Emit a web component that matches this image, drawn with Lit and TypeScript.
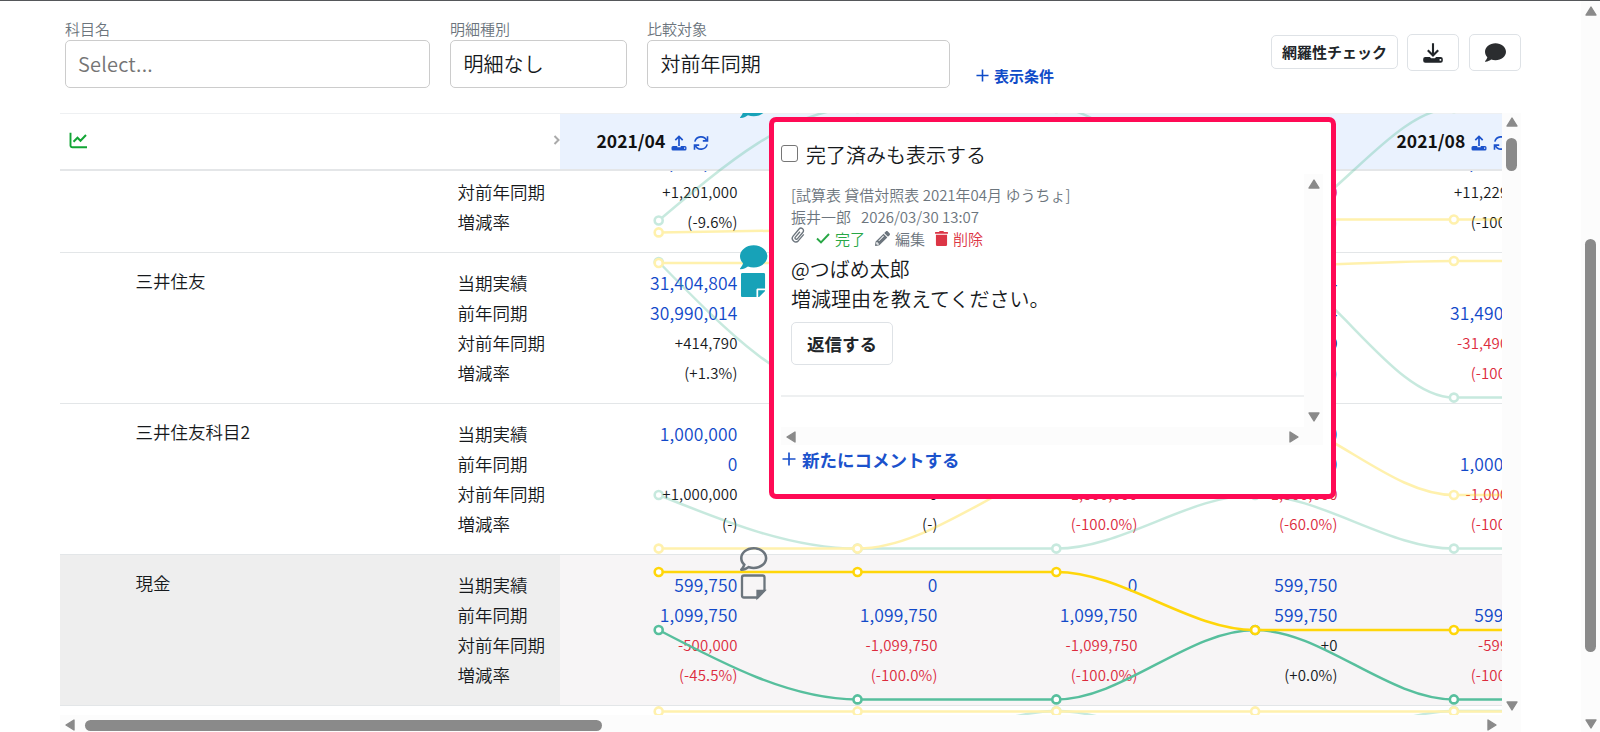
import { LitElement, html, svg, css } from "lit";
import { customElement } from "lit/decorators.js";
import { classMap } from "lit/directives/class-map.js";

type Tone = "link" | "ink" | "minus";
type Line = [string, Tone];
interface Account {
  name: string;
  active?: boolean;
  cells: Line[][];
}
interface Series {
  kind: "green" | "yellow";
  active?: boolean;
  ys: number[];
}

const LABELS = ["当期実績", "前年同期", "対前年同期", "増減率"];
const MONTHS = ["2021/04", "2021/05", "2021/06", "2021/07", "2021/08"];

const cell = (now: string, prev: string, diff: string, rate: string, tone: Tone): Line[] => [
  [now, "link"],
  [prev, "link"],
  [diff, tone],
  [rate, tone],
];

const ACCOUNTS: Account[] = [
  {
    name: "ゆうちょ",
    cells: [
      cell("11,229,000", "12,430,000", "+1,201,000", "(-9.6%)", "ink"),
      cell("0", "12,430,000", "+12,430,000", "(-100.0%)", "ink"),
      cell("0", "12,430,000", "+12,430,000", "(-100.0%)", "ink"),
      cell("12,430,000", "11,229,000", "-1,201,000", "(-9.6%)", "minus"),
      cell("0", "11,229,000", "+11,229,000", "(-100.0%)", "ink"),
    ],
  },
  {
    name: "三井住友",
    cells: [
      cell("31,404,804", "30,990,014", "+414,790", "(+1.3%)", "ink"),
      cell("0", "30,990,014", "-30,990,014", "(-100.0%)", "minus"),
      cell("0", "30,990,014", "-30,990,014", "(-100.0%)", "minus"),
      cell("31,404,804", "30,990,014", "+414,790", "(+1.3%)", "ink"),
      cell("0", "31,490,014", "-31,490,014", "(-100.0%)", "minus"),
    ],
  },
  {
    name: "三井住友科目2",
    cells: [
      cell("1,000,000", "0", "+1,000,000", "(-)", "ink"),
      cell("0", "0", "+0", "(-)", "ink"),
      cell("0", "1,500,000", "-1,500,000", "(-100.0%)", "minus"),
      cell("1,000,000", "2,500,000", "-1,500,000", "(-60.0%)", "minus"),
      cell("0", "1,000,000", "-1,000,000", "(-100.0%)", "minus"),
    ],
  },
  {
    name: "現金",
    active: true,
    cells: [
      cell("599,750", "1,099,750", "-500,000", "(-45.5%)", "minus"),
      cell("0", "1,099,750", "-1,099,750", "(-100.0%)", "minus"),
      cell("0", "1,099,750", "-1,099,750", "(-100.0%)", "minus"),
      cell("599,750", "599,750", "+0", "(+0.0%)", "ink"),
      cell("0", "599,750", "-599,750", "(-100.0%)", "minus"),
    ],
  },
];

const X0 = 658.7;
const STEP = 198.8;
const SERIES: Series[] = [
  { kind: "green", ys: [220.5, 108, 108, 231, 108, 108] },
  { kind: "yellow", ys: [232.4, 229.5, 225, 219.5, 219.5, 219.5] },
  { kind: "green", ys: [262, 397.6, 397.6, 261, 397.6, 397.6] },
  { kind: "yellow", ys: [263, 263, 263, 266, 261, 261] },
  { kind: "green", ys: [495, 548.6, 548.6, 495, 548.6, 548.6] },
  { kind: "yellow", ys: [548.6, 548.6, 468, 415, 495, 495] },
  { kind: "green", active: true, ys: [630, 699.4, 699.4, 630, 699.4, 699.4] },
  { kind: "yellow", active: true, ys: [572, 572, 572, 630, 630, 630] },
  { kind: "green", ys: [760, 760, 711, 760, 711, 711] },
  { kind: "yellow", ys: [711.4, 711.4, 711.4, 711.4, 711.4, 711.4] },
];

/** Monotone cubic path through evenly spaced points. */
function monotonePath(ys: number[]): string {
  const n = ys.length;
  const d = ys.slice(1).map((y, i) => y - ys[i]);
  const m = new Array<number>(n).fill(0);
  for (let i = 1; i < n - 1; i++) {
    const a = d[i - 1];
    const b = d[i];
    if (a * b > 0) m[i] = Math.sign(a) * Math.min(2 * Math.abs(a), 2 * Math.abs(b), Math.abs(a + b) / 2);
  }
  m[0] = (3 * d[0] - m[1]) / 2;
  m[n - 1] = (3 * d[n - 2] - m[n - 2]) / 2;
  let p = `M${X0} ${ys[0]}`;
  for (let i = 0; i < n - 1; i++) {
    const x = X0 + i * STEP;
    p += `C${x + STEP / 3} ${ys[i] + m[i] / 3} ${x + (2 * STEP) / 3} ${ys[i + 1] - m[i + 1] / 3} ${x + STEP} ${ys[i + 1]}`;
  }
  return p;
}

const BUBBLE =
  "M256 32C114.6 32 0 125.1 0 240c0 49.6 21.4 95 57 130.7C44.5 421.1 2.7 466 2.2 466.5c-2.2 2.3-2.8 5.7-1.5 8.7S4.8 480 8 480c66.3 0 116-31.8 140.6-51.4 32.7 12.3 69 19.4 107.4 19.4 141.4 0 256-93.1 256-208S397.4 32 256 32z";
const BUBBLE_OUTLINE =
  "M256 32C114.6 32 0 125.1 0 240c0 47.6 19.9 91.2 52.9 126.3C38 405.7 7 439.1 6.5 439.5c-6.6 7-8.4 17.2-4.6 26S14.4 480 24 480c61.5 0 110-25.7 139.1-46.3C192 442.8 223.2 448 256 448c141.4 0 256-93.1 256-208S397.4 32 256 32zm0 368c-26.7 0-53.1-4.1-78.400-12.100l-22.700-7.200-19.500 13.800c-14.300 10.100-33.900 21.400-57.500 29 7.300-12.100 14.400-25.700 19.900-40.200l10.600-28.100-20.600-21.800C69.700 314.100 48 282.200 48 240c0-88.200 93.300-160 208-160s208 71.800 208 160-93.300 160-208 160z";
const NOTE =
  "M312 320h136V56c0-13.300-10.700-24-24-24H24C10.700 32 0 42.700 0 56v400c0 13.300 10.700 24 24 24h264V344c0-13.200 10.800-24 24-24zm129 55l-98 98c-4.500 4.500-10.600 7-17 7h-6V352h128v6.100c0 6.300-2.500 12.400-7 16.900z";
const TRASH =
  "M432 32H312l-9.4-18.7A24 24 0 0 0 281.1 0H166.8a23.72 23.72 0 0 0-21.4 13.3L136 32H16A16 16 0 0 0 0 48v32a16 16 0 0 0 16 16h416a16 16 0 0 0 16-16V48a16 16 0 0 0-16-16zM32 128v340a44 44 0 0 0 44 44h296a44 44 0 0 0 44-44V128z";
const PENCIL =
  "M497.9 142.1l-46.1 46.1c-4.7 4.7-12.3 4.7-17 0l-111-111c-4.7-4.7-4.7-12.3 0-17l46.1-46.1c18.7-18.7 49.1-18.7 67.9 0l60.1 60.1c18.8 18.7 18.8 49.1 0 67.9zM284.2 99.8L21.6 362.4.4 483.9c-2.9 16.4 11.4 30.6 27.8 27.8l121.5-21.3 262.6-262.6c4.7-4.7 4.7-12.3 0-17l-111-111c-4.8-4.7-12.4-4.7-17.1 0zM124.1 339.9c-5.5-5.5-5.5-14.3 0-19.8l154-154c5.5-5.5 14.3-5.5 19.8 0s5.5 14.3 0 19.8l-154 154c-5.5 5.5-14.3 5.5-19.8 0zM88 424h48v36.3l-64.5 11.3-31.1-31.1L51.7 376H88v48z";

const uploadIcon = html`<svg class="i16" viewBox="0 0 16 16">
  <path d="M8 11V1.600M4.300 5.200L8 1.500l3.700 3.700" fill="none" stroke="currentColor" stroke-width="1.700" />
  <path fill-rule="evenodd" d="M2 11h4.300v1.200h3.400V11H14a1.500 1.500 0 0 1 1.500 1.500v1.500a1.500 1.500 0 0 1-1.500 1.500H2A1.500 1.500 0 0 1 .5 14v-1.500A1.500 1.500 0 0 1 2 11zm11 1.600v1.200h1.200v-1.200z" fill="currentColor" />
</svg>`;
const downloadIcon = html`<svg class="i20" viewBox="0 0 20 20">
  <path d="M10 .3V12M4.800 7.300L10 12.500l5.200-5.200" fill="none" stroke="currentColor" stroke-width="2.100" />
  <path fill-rule="evenodd" d="M2.300 14h4.500l1.400 1.200h3.600l1.400-1.200h4.500a2.100 2.100 0 0 1 2.100 2.100v1.600a2.100 2.100 0 0 1-2.100 2.100H2.300a2.100 2.100 0 0 1-2.100-2.100v-1.600A2.100 2.100 0 0 1 2.300 14zm14.300 2v1.700h1.600V16z" fill="currentColor" />
</svg>`;
const syncIcon = html`<svg class="i16" viewBox="0 0 16 16">
  <g fill="none" stroke="currentColor" stroke-width="1.600">
    <path d="M1.800 6.600A6.400 6.400 0 0 1 13.700 5.400" />
    <path d="M14.200 9.400A6.400 6.400 0 0 1 2.300 10.600" />
    <path d="M14.500 1.200v4.700H9.800" />
    <path d="M1.500 14.800v-4.700h4.700" />
  </g>
</svg>`;
const plusIcon = html`<svg class="plus" viewBox="0 0 14 14">
  <path d="M7 .5v13M.5 7h13" stroke="currentColor" stroke-width="1.700" />
</svg>`;
const tri = (dir: string) => html`<svg class="tri ${dir}" viewBox="0 0 12 10">
  <path d="M6 1L11 9H1z" fill="#8a8a8a" stroke="#8a8a8a" stroke-width="1.400" stroke-linejoin="round" />
</svg>`;

@customElement("app-root")
export class AppRoot extends LitElement {
  static styles = css`
    :host {
      display: block;
      width: 1600px;
      height: 732px;
      overflow: hidden;
      background: #fff;
      color: #16191c;
      font-family: "Noto Sans CJK JP", sans-serif;
      font-size: 20px;
      font-weight: 350;
    }
    * { box-sizing: border-box; }
    svg { display: block; flex: none; }
    .page {
      position: relative;
      display: flex;
      height: 732px;
      border-top: 1px solid #55575a;
    }
    .main { width: 1581px; padding-left: 60px; }
    .filters {
      display: flex;
      height: 112px;
      padding: 17px 0 0 5px;
    }
    .field { margin-right: 20px; }
    .f1 { width: 365px; }
    .f2 { width: 177px; }
    .f3 { width: 303px; margin-right: 26px; }
    .field label {
      display: block;
      height: 22px;
      font-size: 15px;
      line-height: 21px;
      color: #6c757d;
      white-space: nowrap;
    }
    .select {
      height: 48px;
      border: 1px solid #ccc;
      border-radius: 5px;
      padding-left: 12.500px;
      line-height: 46px;
      letter-spacing: 0.05px;
    }
    .placeholder { padding-left: 12px; letter-spacing: 0.2px; color: #757575; }
    .more {
      display: flex;
      align-items: center;
      gap: 5px;
      height: 24px;
      margin-top: 45px;
      font-size: 15px;
      font-weight: 700;
      color: #0f4bc8;
    }
    .plus { width: 13px; height: 13px; }
    .tools {
      display: flex;
      align-items: center;
      gap: 10px;
      height: 37px;
      margin: 16px 0 0 auto;
      padding-right: 60px;
    }
    .btn {
      display: flex;
      align-items: center;
      justify-content: center;
      border: 1px solid #dee2e6;
      border-radius: 5px;
      color: #212529;
      font-weight: 700;
      background: #fff;
    }
    .check { width: 127px; height: 34px; margin: -1px -1px 0 0; padding-bottom: 1px; font-size: 15px; }
    .square { width: 52px; height: 37px; }
    .i16 { width: 16px; height: 16px; }
    .i20 { width: 20px; height: 20px; }
    .bubble { width: 21px; height: 19px; fill: #2b2d2f; }

    .sheet { display: flex; width: 1461px; height: 602px; }
    .view { position: relative; width: 1442px; overflow: hidden; }
    .head {
      position: relative;
      display: flex;
      height: 58px;
      border-top: 1px solid #eef0f2;
      border-bottom: 2px solid #e4e6e8;
    }
    .corner {
      display: flex;
      flex: none;
      align-items: center;
      justify-content: space-between;
      width: 500px;
      padding: 0 0 3px 9px;
      background: #fff;
    }
    .graph { width: 19px; height: 17px; }
    .caret { width: 7px; height: 12px; }
    .month {
      display: flex;
      flex: none;
      align-items: center;
      width: 200px;
      padding: 0 0 2px 36.500px;
      background: #eaf2fe;
      color: #1b52cc;
    }
    .month b {
      width: 74px;
      font-size: 17.500px;
      font-weight: 700;
      color: #111;
      white-space: nowrap;
    }
    .month .i16 { margin: 4px 6px 0 0; }
    .body { height: 544px; overflow: hidden; }
    .rows { margin-top: -69px; }
    .row {
      display: flex;
      height: 151px;
      border-bottom: 1px solid #e3e6e8;
      font-size: 17.500px;
      line-height: 30px;
    }
    .name { flex: none; width: 397px; padding: 13px 0 0 75.500px; }
    .labels { flex: none; width: 103px; padding: 15px 0 0 0.500px; white-space: nowrap; }
    .cell { flex: none; width: 200px; padding: 15px 22.500px 0 0; text-align: right; letter-spacing: 0.12px; }
    .row.active .name, .row.active .labels { background: #eee; }
    .row.active .cell { background: #f7f5f6; }
    .link { color: #1149c9; }
    .ink, .minus { font-size: 15px; }
    .minus { color: #dc2b3d; }
    .overlay { position: absolute; left: 500px; top: 0; width: 942px; height: 602px; }
    .faded { opacity: 0.33; }
    .curve { fill: none; stroke-width: 2.500; }
    .dot { fill: #fff; stroke-width: 2.600; }
    .green { stroke: #57bf9d; }
    .yellow { stroke: #ffd60a; }

    .vbar, .hbar, .pagebar {
      display: flex;
      align-items: center;
      background: #fcfcfc;
    }
    .vbar { flex-direction: column; width: 19px; padding: 4px 0; }
    .vthumb { width: 11px; height: 33px; margin-top: 11px; border-radius: 6px; background: #8a8a8a; }
    .hbar { width: 1461px; height: 18px; padding: 2px 23px 0 4px; }
    .hthumb { width: 517px; height: 11px; margin-left: 9px; border-radius: 6px; background: #8a8a8a; }
    .pagebar { flex-direction: column; width: 19px; padding: 5px 0 3px; }
    .pthumb { width: 11px; height: 413px; margin-top: 223px; border-radius: 6px; background: #8a8a8a; }
    .tri { width: 12px; height: 10px; }
    .down { transform: rotate(180deg); }
    .left { transform: rotate(-90deg); }
    .right { transform: rotate(90deg); }
    .end { margin-top: auto; }
    .hend { margin-left: auto; }

    .pop {
      position: absolute;
      left: 769px;
      top: 116px;
      width: 567px;
      height: 382px;
      padding: 15px 8px 0 7px;
      border: 5px solid #ff0a55;
      border-radius: 7px;
      background: #fff;
    }
    .done { display: flex; align-items: center; gap: 9px; height: 37px; padding-bottom: 2px; line-height: 30px; }
    .box { width: 17px; height: 17px; border: 1.500px solid #767676; border-radius: 3px; margin: -3px -1px 0 0; }
    .scroller { display: flex; height: 253px; }
    .thread { width: 523px; padding: 9px 0 0 10px; }
    .meta {
      display: flex;
      align-items: center;
      height: 22px;
      font-size: 15px;
      color: #6c757d;
      white-space: nowrap;
    }
    .who { margin-right: 10px; }
    .clip { width: 14px; height: 16px; margin: -6px 11px 0 0; }
    .ok, .edit, .del { display: flex; align-items: center; gap: 5px; }
    .ok { width: 59px; color: #28a745; }
    .edit { width: 60px; }
    .del { color: #dc3545; }
    .tick { width: 14px; height: 12px; }
    .pencil { width: 15px; height: 15px; fill: #6c757d; }
    .trash { width: 13px; height: 15px; fill: #dc3545; }
    .text { margin-top: 5px; line-height: 29.500px; }
    .reply { width: 102px; height: 43px; margin-top: 9px; font-size: 17.500px; }
    .rule { height: 2px; margin: 30px 0 0 -10px; background: #eef0f1; }
    .popv { display: flex; flex-direction: column; align-items: center; width: 19px; padding: 5px 0; background: #fcfcfc; }
    .poph { display: flex; align-items: center; width: 542px; height: 18px; padding: 1px 23px 0 4px; background: #fcfcfc; }
    .new {
      display: flex;
      align-items: center;
      gap: 6px;
      height: 28px;
      padding-left: 1px;
      font-size: 17.500px;
      font-weight: 700;
      color: #1b52cc;
    }
    .new .plus { width: 14px; height: 14px; }
  `;

  private curves(active: boolean) {
    return SERIES.filter((s) => !!s.active === active).map(
      (s) => svg`<path class="curve ${s.kind}" d=${monotonePath(s.ys)} />
        ${s.ys.map((y, i) => svg`<circle class="dot ${s.kind}" cx=${X0 + i * STEP} cy=${y} r="4" />`)}`
    );
  }

  private row(a: Account) {
    return html`<div class=${classMap({ row: true, active: !!a.active })}>
      <div class="name">${a.name}</div>
      <div class="labels">${LABELS.map((l) => html`<div>${l}</div>`)}</div>
      ${a.cells.map((c) => html`<div class="cell">${c.map(([t, tone]) => html`<div class=${tone}>${t}</div>`)}</div>`)}
    </div>`;
  }

  private popover() {
    return html`<div class="pop">
      <div class="done"><span class="box"></span><span>完了済みも表示する</span></div>
      <div class="scroller">
        <div class="thread">
          <div class="meta">[試算表 貸借対照表 2021年04月 ゆうちょ]</div>
          <div class="meta"><span class="who">振井一郎</span><span>2026/03/30 13:07</span></div>
          <div class="meta">
            <svg class="clip" viewBox="0 0 13 15">
              <path d="M11.900 6.900l-5 5.900a3.300 3.300 0 0 1-5-4.300l5.600-6.600a2.300 2.300 0 0 1 3.600 3l-5.200 6.200a1.200 1.200 0 0 1-1.900-1.600l4.300-5.100" fill="none" stroke="#6c757d" stroke-width="1.300" />
            </svg>
            <span class="ok"><svg class="tick" viewBox="0 0 14 12"><path d="M1 6.500l4 4L13 2" fill="none" stroke="currentColor" stroke-width="1.900" /></svg>完了</span>
            <span class="edit"><svg class="pencil" viewBox="0 0 512 512"><path d=${PENCIL} /></svg>編集</span>
            <span class="del"><svg class="trash" viewBox="0 0 448 512"><path d=${TRASH} /></svg>削除</span>
          </div>
          <div class="text">@つばめ太郎<br />増減理由を教えてください。</div>
          <div class="btn reply">返信する</div>
          <div class="rule"></div>
        </div>
        <div class="popv">${tri("up")}<span class="end">${tri("down")}</span></div>
      </div>
      <div class="poph">${tri("left")}<span class="hend">${tri("right")}</span></div>
      <div class="new">${plusIcon}<span>新たにコメントする</span></div>
    </div>`;
  }

  render() {
    return html`<div class="page">
      <div class="main">
        <div class="filters">
          <div class="field f1"><label>科目名</label><div class="select placeholder">Select...</div></div>
          <div class="field f2"><label>明細種別</label><div class="select">明細なし</div></div>
          <div class="field f3"><label>比較対象</label><div class="select">対前年同期</div></div>
          <div class="more">${plusIcon}<span>表示条件</span></div>
          <div class="tools">
            <div class="btn check">網羅性チェック</div>
            <div class="btn square">${downloadIcon}</div>
            <div class="btn square"><svg class="bubble" viewBox="0 24 512 464"><path d=${BUBBLE} /></svg></div>
          </div>
        </div>
        <div class="sheet">
          <div class="view">
            <div class="head">
              <div class="corner">
                <svg class="graph" viewBox="0 0 19 17">
                  <path d="M1.500 .8v12.700a1.800 1.800 0 0 0 1.800 1.800H18" fill="none" stroke="#12a535" stroke-width="1.900" />
                  <path d="M4.500 9.700l4-4 3 3L17 3" fill="none" stroke="#12a535" stroke-width="2" />
                </svg>
                <svg class="caret" viewBox="0 0 7 12"><path d="M1.500 2L5.500 6l-4 4" fill="none" stroke="#aaa" stroke-width="2" /></svg>
              </div>
              ${MONTHS.map((m) => html`<div class="month"><b>${m}</b>${uploadIcon}${syncIcon}</div>`)}
            </div>
            <div class="body"><div class="rows">${ACCOUNTS.map((a) => this.row(a))}</div></div>
            <svg class="overlay" viewBox="560 113 942 602">
              <g class="faded">${this.curves(false)}</g>
              ${this.curves(true)}
              <g fill="#17a2b8">
                <path transform="translate(740 92.300) scale(.0535)" d=${BUBBLE} />
                <path transform="translate(740 243.500) scale(.0535)" d=${BUBBLE} />
                <path transform="translate(741 271.300) scale(.0537)" d=${NOTE} />
              </g>
              <path transform="translate(740 545.300) scale(.0535)" d=${BUBBLE_OUTLINE} fill="#6c757d" />
              <g fill="none" stroke="#6c757d" stroke-width="2.300">
                <path d="M744 575.500h18.500a2 2 0 0 1 2 2V590l-7 7.500H744a2 2 0 0 1-2-2v-18a2 2 0 0 1 2-2z" />
                <path d="M764 591h-6.500v6.500z" fill="#6c757d" />
              </g>
            </svg>
          </div>
          <div class="vbar">${tri("up")}<span class="vthumb"></span><span class="end">${tri("down")}</span></div>
        </div>
        <div class="hbar">${tri("left")}<span class="hthumb"></span><span class="hend">${tri("right")}</span></div>
      </div>
      <div class="pagebar">${tri("up")}<span class="pthumb"></span><span class="end">${tri("down")}</span></div>
      ${this.popover()}
    </div>`;
  }
}
